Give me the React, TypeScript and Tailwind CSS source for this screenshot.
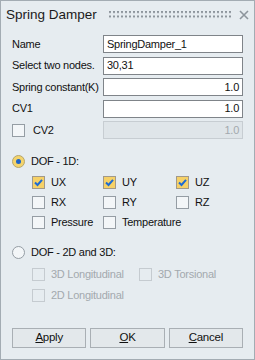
import React from 'react'

const font = { fontFamily: '"Liberation Sans", Arial, sans-serif' }

function Check({ checked = false, disabled = false }: { checked?: boolean; disabled?: boolean }) {
  const cls = checked
    ? 'border-[#a1998a] bg-[#f6d167]'
    : disabled
      ? 'border-[#c5cbd0] bg-[#e6ecf0]'
      : 'border-[#959da4] bg-[#f3f6f8]'
  return (
    <span className={`w-[13px] h-[13px] border flex items-center justify-center shrink-0 ${cls}`}>
      {checked && (
        <svg width="11" height="11" viewBox="0 0 11 11">
          <polyline points="2,5.5 4.5,8 9,2.8" fill="none" stroke="#1d6bd3" strokeWidth="2" />
        </svg>
      )}
    </span>
  )
}

function Radio({ on = false }: { on?: boolean }) {
  return (
    <span
      className={`w-[13px] h-[13px] rounded-full border flex items-center justify-center shrink-0 ${
        on ? 'border-[#b5a66f] bg-[#f4d46c]' : 'border-[#959da4] bg-[#f3f6f8]'
      }`}
    >
      {on && <span className="w-[5px] h-[5px] rounded-full bg-[#1d64c8]" />}
    </span>
  )
}

function Opt({ label, checked, disabled }: { label: string; checked?: boolean; disabled?: boolean }) {
  return (
    <div className="flex items-center h-[14px] gap-[6px]">
      <Check checked={checked} disabled={disabled} />
      <span className={disabled ? 'text-[#a3a9ae]' : 'text-[#111]'}>{label}</span>
    </div>
  )
}

function Field({ label, value, right, disabled }: { label: string; value: string; right?: boolean; disabled?: boolean }) {
  return (
    <div className="flex items-center h-[18px]">
      <span className="w-[91px] shrink-0 text-[#111] whitespace-nowrap">{label}</span>
      <div
        className={`flex-1 h-[18px] border flex items-center px-[3px] ${
          disabled ? 'border-[#c7cdd2] bg-[#dfe5e9] text-[#a3a9ae]' : 'border-[#7f8489] bg-white text-[#111]'
        } ${right ? 'justify-end' : ''}`}
      >
        {value}
      </div>
    </div>
  )
}

export default function App() {
  return (
    <div
      className="w-[255px] h-[360px] border border-[#a3acb3] bg-[#e6ecf0] flex flex-col text-[11px] tracking-[-0.25px] select-none"
      style={font}
    >
      {/* Title bar */}
      <div className="h-[28px] flex items-center pl-[5px] pr-[5px] shrink-0">
        <span className="text-[13.5px] tracking-normal text-[#1a1a1a]">Spring Damper</span>
        <svg className="ml-[12px]" width="122" height="8" viewBox="0 0 122 8">
          <defs>
            <pattern id="dots" width="4" height="4.5" patternUnits="userSpaceOnUse">
              <rect x="0" y="0" width="2" height="2" fill="#8d959c" />
            </pattern>
          </defs>
          <rect x="0" y="0" width="122" height="8" fill="url(#dots)" />
        </svg>
        <svg className="ml-auto mr-[0px]" width="10" height="10" viewBox="0 0 10 10">
          <path d="M1 1 L9 9 M9 1 L1 9" stroke="#8d959c" strokeWidth="1.6" />
        </svg>
      </div>

      <div className="flex-1 flex flex-col pl-[11px] pr-[11px] pt-[6px] pb-[11px]">
        <div className="flex flex-col gap-[3.5px]">
          <Field label="Name" value="SpringDamper_1" />
          <Field label="Select two nodes." value="30,31" />
          <Field label="Spring constant(K)" value="1.0" right />
          <Field label="CV1" value="1.0" right />
          <div className="flex items-center h-[18px]">
            <div className="w-[91px] shrink-0 flex items-center gap-[8px]">
              <Check />
              <span className="text-[#111]">CV2</span>
            </div>
            <div className="flex-1 h-[18px] border border-[#c7cdd2] bg-[#dfe5e9] text-[#a3a9ae] flex items-center justify-end px-[3px]">
              1.0
            </div>
          </div>
        </div>

        <div className="flex items-center h-[14px] gap-[6px] mt-[15px]">
          <Radio on />
          <span className="text-[#111]">DOF - 1D:</span>
        </div>
        <div className="grid grid-cols-[71px_73px_1fr] gap-y-[6px] pl-[20px] mt-[7px]">
          <Opt label="UX" checked />
          <Opt label="UY" checked />
          <Opt label="UZ" checked />
          <Opt label="RX" />
          <Opt label="RY" />
          <Opt label="RZ" />
          <Opt label="Pressure" />
          <Opt label="Temperature" />
        </div>

        <div className="flex items-center h-[14px] gap-[6px] mt-[16px]">
          <Radio />
          <span className="text-[#111]">DOF - 2D and 3D:</span>
        </div>
        <div className="grid grid-cols-[107px_1fr] gap-y-[7px] pl-[20px] mt-[8.5px]">
          <Opt label="3D Longitudinal" disabled />
          <Opt label="3D Torsional" disabled />
          <Opt label="2D Longitudinal" disabled />
        </div>

        <div className="mt-auto flex gap-[4px]">
          {['Apply', 'OK', 'Cancel'].map((b) => (
            <button
              key={b}
              className="flex-1 h-[20px] border border-[#a9afb4] bg-[#e3e8eb] text-[#111] text-[11.5px]"
            >
              <span className="underline underline-offset-[1px]">{b[0]}</span>
              {b.slice(1)}
            </button>
          ))}
        </div>
      </div>
    </div>
  )
}
